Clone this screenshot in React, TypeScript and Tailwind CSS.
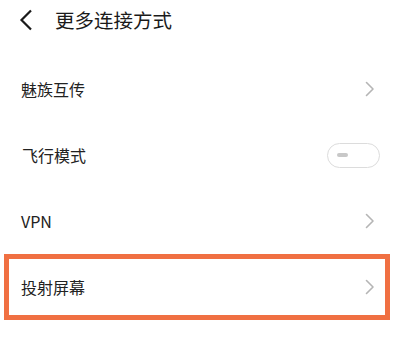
import React from "react";

const font = { fontFamily: '"Noto Sans CJK SC", "Noto Sans", sans-serif' };

function Chevron() {
  return (
    <svg width="10" height="16" viewBox="0 0 10 16" className="shrink-0">
      <path d="M1.5 1.5 L8 8 L1.5 14.5" fill="none" stroke="#b5b5b5" strokeWidth="1.6" strokeLinecap="round" strokeLinejoin="round" />
    </svg>
  );
}

function Toggle() {
  return (
    <div className="w-[53px] h-[25px] rounded-full border-[1.5px] border-[#dcdcdc] flex items-center pl-[9px] box-border">
      <div className="w-[11px] h-[4px] rounded-full bg-[#c8c8c8]" />
    </div>
  );
}

export default function App() {
  return (
    <div className="w-[400px] h-[340px] bg-white overflow-hidden text-[#222]" style={font}>
      <div className="h-[40px] flex items-center">
        <svg width="14" height="22" viewBox="0 0 14 22" className="ml-[19px]">
          <path d="M12 1.5 L2.5 11 L12 20.5" fill="none" stroke="#1a1a1a" strokeWidth="2.2" strokeLinejoin="miter" />
        </svg>
        <span className="ml-[22px] text-[19.5px] leading-none text-[#1a1a1a]">更多连接方式</span>
      </div>
      <div className="h-[16px]" />
      <div className="h-[66px] flex items-center justify-between pl-[21px] pr-[25px]">
        <span className="text-[16px] leading-none">魅族互传</span>
        <Chevron />
      </div>
      <div className="h-[66px] flex items-center justify-between pl-[22px] pr-[20px]">
        <span className="text-[16px] leading-none">飞行模式</span>
        <Toggle />
      </div>
      <div className="h-[66px] flex items-center justify-between pl-[21px] pr-[25px]">
        <span className="text-[16px] leading-none">VPN</span>
        <Chevron />
      </div>
      <div className="ml-[4px] mr-[10px] h-[66px] border-[5px] border-[#f07042] flex items-center justify-between pl-[12px] pr-[10px]">
        <span className="text-[16px] leading-none">投射屏幕</span>
        <Chevron />
      </div>
    </div>
  );
}
